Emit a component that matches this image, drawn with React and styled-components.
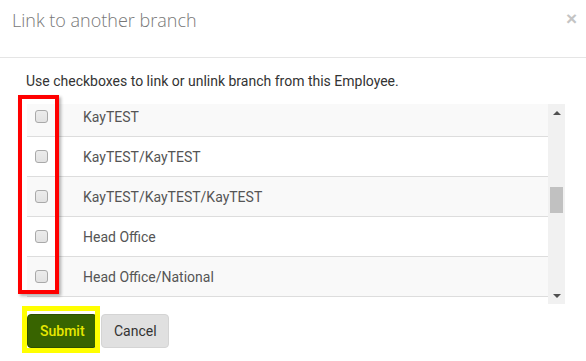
import styled, { createGlobalStyle } from "styled-components";

const GlobalStyle = createGlobalStyle`
  body {
    margin: 0;
    background: #fff;
    font-family: Roboto, "Liberation Sans", sans-serif;
  }
`;

// Styled components
const Modal = styled.div`
  position: relative;
  width: 586px;
  height: 361px;
  background: #fff;
  overflow: hidden;
`;

const Header = styled.div`
  display: flex;
  justify-content: space-between;
  align-items: flex-start;
  height: 58px;
  box-sizing: border-box;
  padding: 8px 9px 0 12px;
  border-bottom: 1px solid #e5e5e5;
`;

const Title = styled.h4`
  margin: 0;
  font-family: "Open Sans", sans-serif;
  font-weight: 300;
  font-size: 18px;
  line-height: 24px;
  color: #777;
`;

const Close = styled.button`
  border: none;
  background: none;
  padding: 0;
  margin-top: 1px;
  font-family: "Liberation Sans", sans-serif;
  font-weight: 700;
  font-size: 19px;
  line-height: 20px;
  color: #c4c4c4;
  cursor: pointer;
`;

const Body = styled.div`
  padding: 14px 21px 0 27px;
`;

const Hint = styled.p`
  margin: 0 0 14px -1px;
  font-size: 14px;
  line-height: 18px;
  color: #333;
`;

const ListBox = styled.div`
  display: flex;
  height: 200px;
`;

const Viewport = styled.div`
  flex: 1;
  overflow: hidden;
  background: #fff;
`;

const List = styled.div`
  margin-top: -7px;
`;

const Row = styled.label`
  display: grid;
  grid-template-columns: 56px 1fr;
  align-items: center;
  height: 40px;
  box-sizing: border-box;
  border-bottom: 1px solid #ddd;
  background: ${(p) => (p.$striped ? "#f9f9f9" : "#fff")};
  font-size: 14px;
  line-height: 18px;
  color: #555;
`;

const Check = styled.input`
  appearance: none;
  margin: 0 0 0 8px;
  width: 13px;
  height: 13px;
  box-sizing: border-box;
  border: 1px solid #a9a9a9;
  border-radius: 3px;
  background: linear-gradient(#ececec, #e2e2e2);
`;

const ScrollBar = styled.div`
  display: flex;
  flex-direction: column;
  width: 17px;
  background: #f1f1f1;
`;

const ArrowBtn = styled.div`
  display: flex;
  align-items: center;
  justify-content: center;
  height: 17px;
`;

const Track = styled.div`
  flex: 1;
  padding: 66px 2px 0;
`;

const Thumb = styled.div`
  height: 26px;
  background: #c1c1c1;
`;

const Footer = styled.div`
  display: flex;
  gap: 4px;
  padding: 10px 0 0 27px;
`;

const Button = styled.button`
  height: 34px;
  padding: 0 12px;
  border-radius: 4px;
  font-family: Roboto, "Liberation Sans", sans-serif;
  font-size: 14px;
  cursor: pointer;
  border: 1px solid ${(p) => (p.$primary ? "#2d5000" : "#d4d4d4")};
  background: ${(p) => (p.$primary ? "#386400" : "#e0e0e0")};
  color: ${(p) => (p.$primary ? "#e8e800" : "#333")};
  font-weight: ${(p) => (p.$primary ? 500 : 400)};
  width: ${(p) => p.$w}px;
`;

// annotation boxes drawn over the screenshot
const Mark = styled.div`
  position: absolute;
  box-sizing: border-box;
  pointer-events: none;
  border: ${(p) => p.$bw}px solid ${(p) => p.$color};
  box-shadow: ${(p) => (p.$shadow ? "2px 2px 3px rgba(0,0,0,0.3)" : "none")};
`;

const Arrow = ({ down }) => (
  <svg width="8" height="4" viewBox="0 0 8 4">
    <path d={down ? "M0 0H8L4 4Z" : "M0 4H8L4 0Z"} fill="#505050" />
  </svg>
);

const branches = [
  "KayTEST",
  "KayTEST/KayTEST",
  "KayTEST/KayTEST/KayTEST",
  "Head Office",
  "Head Office/National",
];

export default function App() {
  return (
    <Modal>
      <GlobalStyle />
      <Header>
        <Title>Link to another branch</Title>
        <Close type="button">×</Close>
      </Header>
      <Body>
        <Hint>Use checkboxes to link or unlink branch from this Employee.</Hint>
        <ListBox>
          <Viewport>
            <List>
              {branches.map((name, i) => (
                <Row key={name} $striped={i % 2 === 0}>
                  <Check type="checkbox" />
                  <span>{name}</span>
                </Row>
              ))}
            </List>
          </Viewport>
          <ScrollBar>
            <ArrowBtn>
              <Arrow />
            </ArrowBtn>
            <Track>
              <Thumb />
            </Track>
            <ArrowBtn>
              <Arrow down />
            </ArrowBtn>
          </ScrollBar>
        </ListBox>
      </Body>
      <Footer>
        <Button type="button" $primary $w={70}>
          Submit
        </Button>
        <Button type="button" $w={68}>
          Cancel
        </Button>
      </Footer>
      <Mark $color="#ff0000" $bw={4} $shadow style={{ left: 18, top: 95, width: 41, height: 199 }} />
      <Mark $color="#ffff00" $bw={5} style={{ left: 22, top: 306, width: 78, height: 47 }} />
    </Modal>
  );
}
